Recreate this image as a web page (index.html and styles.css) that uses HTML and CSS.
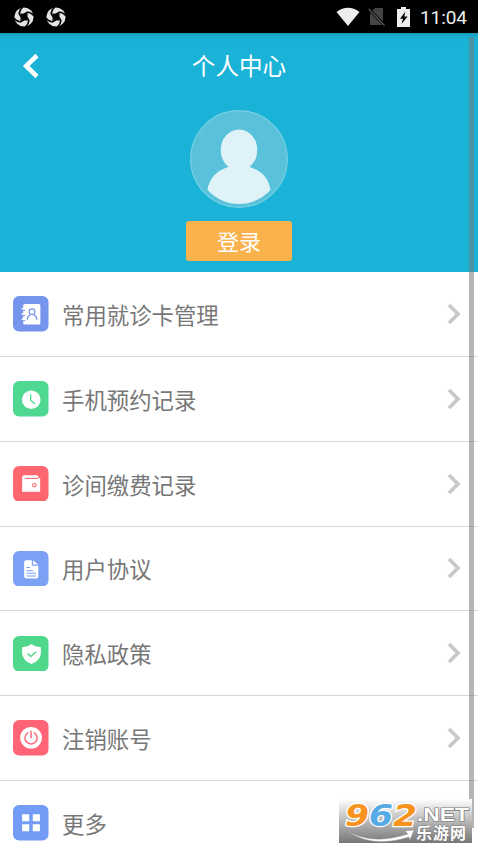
FILE: index.html
```html
<!DOCTYPE html>
<html lang="zh-CN">
<head>
<meta charset="utf-8">
<title>个人中心</title>
<link rel="stylesheet" href="styles.css">
</head>
<body>
<svg width="0" height="0" class="defs">
  <symbol id="swirl" viewBox="0 0 20 20">
    <circle cx="10" cy="10" r="9.6" fill="#e4e4e4"/>
    <path d="M5 7Q9.5 8.2 13.2 5Q11.8 9.5 15 13.2Q10.5 11.8 6.8 15Q8.2 10.5 5 7Z" fill="#000" stroke="#000" stroke-width="1"/>
    <path d="M5 7Q5.2 3 8.8 0M13.2 5Q17 5.2 20 8.8M15 13.2Q14.8 17 11.2 20M6.8 15Q3 14.8 0 11.2" fill="none" stroke="#000" stroke-width="1.6"/>
  </symbol>
  <symbol id="chevron" viewBox="0 0 14 22"><path d="M2 2L11 11L2 20" fill="none" stroke="#c8c8c8" stroke-width="3.7"/></symbol>
</svg>
<header class="status">
  <svg class="swirl" width="20" height="20"><use href="#swirl"/></svg>
  <svg class="swirl" width="20" height="20"><use href="#swirl"/></svg>
  <svg class="wifi" width="24" height="20" viewBox="0 0 24 20"><path d="M0.5 5Q12-3.4 23.5 5L12 19Z" fill="#eee"/></svg>
  <svg class="sim" width="18" height="20" viewBox="0 0 18 20"><path d="M7 1H15V18H2V6Z" fill="#444"/><path d="M0 1.5L17 18.5" stroke="#000" stroke-width="3"/><path d="M.7 2L16.5 18.5" stroke="#555" stroke-width="1.3"/></svg>
  <svg class="battery" width="13" height="20" viewBox="0 0 13 20"><path d="M4 0H9V2H13V20H0V2H4Z" fill="#eee"/><path d="M8.4 4.5L3 11.8H6L4.5 17L10.6 9.4H7.2Z" fill="#000"/></svg>
  <span class="clock">11:04</span>
</header>
<section class="profile">
  <div class="titlebar">
    <svg class="back" width="18" height="26" viewBox="0 0 18 26"><path d="M15 2.5L4.2 13L15 23.5" fill="none" stroke="#fff" stroke-width="4.6"/></svg>
    <h1>个人中心</h1>
  </div>
  <svg class="avatar" width="98" height="98" viewBox="0 0 98 98">
    <circle cx="49" cy="49" r="48.3" fill="#59c1da" stroke="#78d0e5" stroke-width="1.2"/>
    <ellipse cx="49" cy="40" rx="18.3" ry="20.6" fill="#def2f8"/>
    <path d="M38 55V57Q20 63 17.5 80Q31 94 49 94Q67 94 80.5 80Q78 63 60 57V55Z" fill="#def2f8"/>
  </svg>
  <button class="login">登录</button>
</section>
<main class="menu">
  <div class="row"><svg class="icon" viewBox="0 0 35 35"><rect width="35" height="35" rx="6" fill="#7595ec"/><rect x="10" y="8" width="17" height="20" rx="1.5" fill="#fff"/><path d="M8.5 12.5H12M8.5 17.7H12M8.5 23H12" stroke="#fff" stroke-width="1.4"/><path d="M9.7 14H12M9.7 19.2H12M9.7 24.5H12" stroke="#7595ec" stroke-width="1"/><circle cx="18.8" cy="15.6" r="2.8" fill="none" stroke="#7595ec" stroke-width="1.2"/><path d="M14 23.5Q14.2 19.7 17.3 18.2M20.3 18.2Q23.4 19.7 23.6 23.5" fill="none" stroke="#7595ec" stroke-width="1.2"/></svg><span class="label">常用就诊卡管理</span><svg class="chevron"><use href="#chevron"/></svg></div>
  <div class="row"><svg class="icon" viewBox="0 0 35 35"><rect width="35" height="35" rx="6" fill="#4fd892"/><circle cx="18" cy="18.5" r="9.2" fill="#fff"/><path d="M17.4 13V18.7L21.6 22.7" fill="none" stroke="#4fd892" stroke-width="1.3"/></svg><span class="label">手机预约记录</span><svg class="chevron"><use href="#chevron"/></svg></div>
  <div class="row"><svg class="icon" viewBox="0 0 35 35"><rect width="35" height="35" rx="6" fill="#fe6670"/><path d="M9 11Q9 9 11 9H23.5Q25 9 25 10.5V11.8H26.8V25.5H9Z" fill="#fff"/><path d="M12 12.3H25" stroke="#fe6670" stroke-width="1"/><circle cx="21" cy="19" r="1.7" fill="#fff" stroke="#fe6670" stroke-width="1.1"/></svg><span class="label">诊间缴费记录</span><svg class="chevron"><use href="#chevron"/></svg></div>
  <div class="row"><svg class="icon" viewBox="0 0 35 35"><rect width="35" height="35" rx="6" fill="#7ba0f4"/><path d="M11 11Q11 9 13 9H18.5V14.5H25V25Q25 27 23 27H13Q11 27 11 25Z" fill="#fff"/><path d="M19.8 9L24.7 13.4H19.8Z" fill="#fff"/><path d="M13.3 16.3H17M13.3 19.4H20M13.3 22H22.7M13.3 24.6H22.7" stroke="#7ba0f4"/></svg><span class="label">用户协议</span><svg class="chevron"><use href="#chevron"/></svg></div>
  <div class="row"><svg class="icon" viewBox="0 0 35 35"><rect width="35" height="35" rx="6" fill="#4fd78b"/><path d="M18.2 8Q21.5 10.8 27.5 11V16.5Q27.5 24.2 18.2 27.7Q9 24.2 9 16.5V11Q15 10.8 18.2 8Z" fill="#fff"/><path d="M14.4 17.2L17.5 20.3L22.8 15.5" fill="none" stroke="#4fd78b" stroke-width="1.4"/></svg><span class="label">隐私政策</span><svg class="chevron"><use href="#chevron"/></svg></div>
  <div class="row"><svg class="icon" viewBox="0 0 35 35"><rect width="35" height="35" rx="6" fill="#ff6577"/><circle cx="17.8" cy="17.5" r="10.7" fill="#fff"/><path d="M14.9 12.4A6 6 0 1 0 20.7 12.4M17.8 10.5V18" fill="none" stroke="#ff6577" stroke-width="1.4"/></svg><span class="label">注销账号</span><svg class="chevron"><use href="#chevron"/></svg></div>
  <div class="row"><svg class="icon" viewBox="0 0 35 35"><rect width="35" height="35" rx="6" fill="#739cf6"/><path d="M9 9H16V16H9ZM19.5 9H26.5V16H19.5ZM9 19H16V26H9ZM19.5 19H26.5V26H19.5Z" fill="#fff"/></svg><span class="label">更多</span></div>
</main>
<div class="scrollbar"></div>
<div class="watermark">
  <svg width="133" height="44" viewBox="0 0 133 44">
    <defs><linearGradient id="shade" x2="0" y2="1"><stop stop-color="#fff"/><stop offset=".45" stop-color="#c0c0c0"/><stop offset="1" stop-color="#777"/></linearGradient></defs>
    <rect width="133" height="44" fill="url(#shade)"/>
    <path d="M7 31Q32 47 69 35L66 32L75 31L71 41L70 38Q32 50 7 31Z" fill="#fff" stroke="#888" stroke-width=".4"/>
    <text class="brand" x="6" y="27" textLength="72" lengthAdjust="spacingAndGlyphs"><tspan fill="#f7931e">9</tspan><tspan fill="#56aae5">6</tspan><tspan fill="#f7931e">2</tspan></text>
    <text class="net" x="78" y="22" textLength="52" lengthAdjust="spacingAndGlyphs">.NET</text>
    <text class="site" x="77" y="40" textLength="50">乐游网</text>
  </svg>
</div>
</body>
</html>
```

FILE: styles.css
```css
* { box-sizing: border-box; }
body {
  margin: 0;
  height: 849px;
  overflow: hidden;
  position: relative;
  background: #fff;
  font-family: Roboto, "Noto Sans CJK SC", sans-serif;
}
.defs { position: absolute; }
.status {
  height: 33px;
  background: #000;
  display: flex;
  align-items: center;
  padding: 0 11px 0 14px;
}
.swirl { margin-right: 12px; }
.wifi { margin-left: auto; }
.sim { margin-left: 8px; }
.battery { margin-left: 11px; }
.clock {
  margin-left: 10px;
  width: 47px;
  color: #eee;
  font-size: 19px;
  line-height: 33px;
  letter-spacing: -0.1px;
  padding-top: 2px;
}
.profile {
  height: 239px;
  background: linear-gradient(#1699b7, #19b0d4 4px, #1ab2d7 9px);
  display: flex;
  flex-direction: column;
  align-items: center;
}
.titlebar {
  width: 100%;
  height: 77px;
  padding: 16px 22px 0;
  display: grid;
  grid-template-columns: 18px 1fr 18px;
  align-items: start;
}
.back { margin-top: 4px; }
h1 {
  margin: 1px 0 0;
  color: #fff;
  font-size: 23.6px;
  line-height: 34px;
  font-weight: 400;
  text-align: center;
}
.avatar { flex: none; }
.login {
  margin-top: 13px;
  width: 106px;
  height: 40px;
  padding: 0 0 2px;
  border: 0;
  border-radius: 3px;
  background: #fab24d;
  color: #fff;
  font: 400 22px/38px "Noto Sans CJK SC", sans-serif;
}
.row {
  height: 84.85px;
  padding: 0 17px 0 13px;
  display: flex;
  align-items: center;
  border-bottom: 1px solid #d8d8d8;
}
.icon { width: 35.5px; height: 35.5px; flex: none; }
.label {
  margin-left: 13.5px;
  color: #777;
  font-size: 22.4px;
  line-height: 32px;
  padding-top: 4px;
}
.chevron { width: 14px; height: 22px; margin-left: auto; }
.scrollbar {
  position: absolute;
  left: 469px;
  top: 37px;
  width: 5px;
  height: 791px;
  background: rgba(120, 120, 120, .55);
}
.watermark {
  position: absolute;
  left: 339px;
  top: 799px;
  width: 133px;
  height: 44px;
}
.watermark svg { display: block; }
.brand {
  font: italic 700 31px "DejaVu Sans", sans-serif;
  stroke: #fff;
  stroke-width: 2.5px;
  paint-order: stroke;
}
.net {
  font: 700 18px "Liberation Sans", sans-serif;
  fill: #fff;
  stroke: #777;
  stroke-width: 1.2px;
  paint-order: stroke;
}
.site {
  font: 700 16px "Noto Sans CJK SC", sans-serif;
  fill: #fff;
  stroke: #777;
  stroke-width: 1px;
  paint-order: stroke;
}
```
